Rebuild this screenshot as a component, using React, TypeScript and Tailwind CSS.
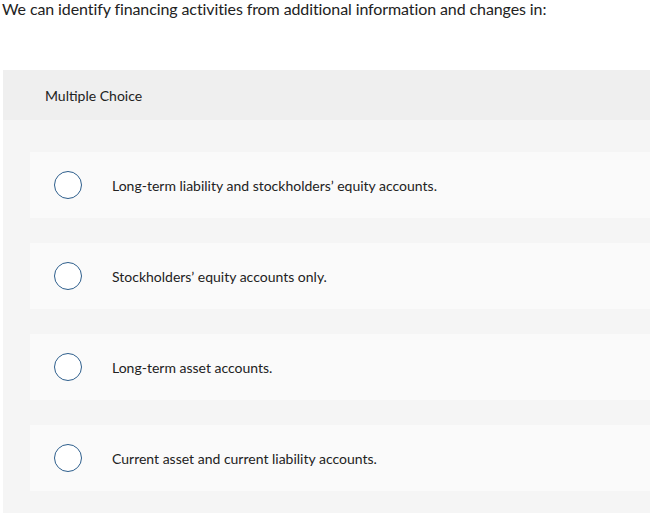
import React from "react";

const options = [
  "Long-term liability and stockholders’ equity accounts.",
  "Stockholders’ equity accounts only.",
  "Long-term asset accounts.",
  "Current asset and current liability accounts.",
];

export default function App() {
  return (
    <div className="w-[650px] h-[513px] overflow-hidden bg-white text-[#222]" style={{ fontFamily: "Lato, 'Open Sans', sans-serif" }}>
      <p className="pl-[2px] text-[16px] leading-[17px] tracking-[-0.1px]">We can identify financing activities from additional information and changes in:</p>
      <div className="ml-[3px] mt-[53px] bg-[#f5f5f5]">
        <div className="h-[50px] bg-[#efefef] pl-[42px] flex items-center text-[14px] text-[#222]">Multiple Choice</div>
        <div className="pl-[27px] pt-[32px] pb-[24px] flex flex-col gap-[25px]">
          {options.map((o) => (
            <div key={o} className="h-[66px] bg-[#fafafa] flex items-center">
              <div className="ml-[24px] w-[28px] h-[28px] rounded-full border-[1.5px] border-[#2d5e8c] bg-white shrink-0" />
              <span className="ml-[30px] text-[14px] text-[#222]">{o}</span>
            </div>
          ))}
        </div>
      </div>
    </div>
  );
}
